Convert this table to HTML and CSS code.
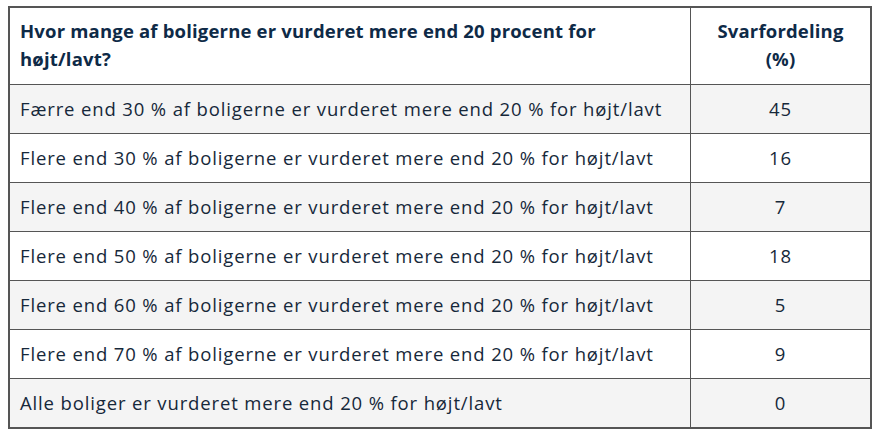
FILE: index.html
```html
<!DOCTYPE html>
<html lang="da">
<head>
<meta charset="utf-8">
<link rel="stylesheet" href="styles.css">
</head>
<body>
<table class="survey">
  <thead>
    <tr>
      <th class="q">Hvor mange af boligerne er vurderet mere end 20 procent for højt/lavt?</th>
      <th class="pct">Svarfordeling<br>(%)</th>
    </tr>
  </thead>
  <tbody>
    <tr class="alt"><td>Færre end 30 % af boligerne er vurderet mere end 20 % for højt/lavt</td><td class="num">45</td></tr>
    <tr><td>Flere end 30 % af boligerne er vurderet mere end 20 % for højt/lavt</td><td class="num">16</td></tr>
    <tr class="alt"><td>Flere end 40 % af boligerne er vurderet mere end 20 % for højt/lavt</td><td class="num">7</td></tr>
    <tr><td>Flere end 50 % af boligerne er vurderet mere end 20 % for højt/lavt</td><td class="num">18</td></tr>
    <tr class="alt"><td>Flere end 60 % af boligerne er vurderet mere end 20 % for højt/lavt</td><td class="num">5</td></tr>
    <tr><td>Flere end 70 % af boligerne er vurderet mere end 20 % for højt/lavt</td><td class="num">9</td></tr>
    <tr class="alt"><td>Alle boliger er vurderet mere end 20 % for højt/lavt</td><td class="num">0</td></tr>
  </tbody>
</table>
</body>
</html>
```

FILE: styles.css
```css
html, body {
  margin: 0;
  padding: 0;
  background: #ffffff;
}
body {
  padding: 6px 6px 0 8px;
  font-family: "Open Sans", "Noto Sans", sans-serif;
  color: #16283a;
}
.survey {
  width: 864px;
  border-collapse: collapse;
  border: 2px solid #555555;
  font-size: 18.5px;
  letter-spacing: 0.86px;
}
.survey th,
.survey td {
  border: 1px solid #555555;
  padding: 0 10px;
  vertical-align: middle;
}
.survey th {
  height: 73px;
  padding-bottom: 3px;
  font-weight: 700;
  color: #0e2a47;
  line-height: 28px;
  text-align: left;
  letter-spacing: 0.18px;
}
.survey th.q {
  width: 660px;
}
.survey th.pct {
  text-align: center;
}
.survey td {
  height: 47px;
  padding-bottom: 1px;
  line-height: 24px;
}
.survey td.num {
  text-align: center;
}
.survey tr.alt td {
  background: #f4f4f4;
}
```
